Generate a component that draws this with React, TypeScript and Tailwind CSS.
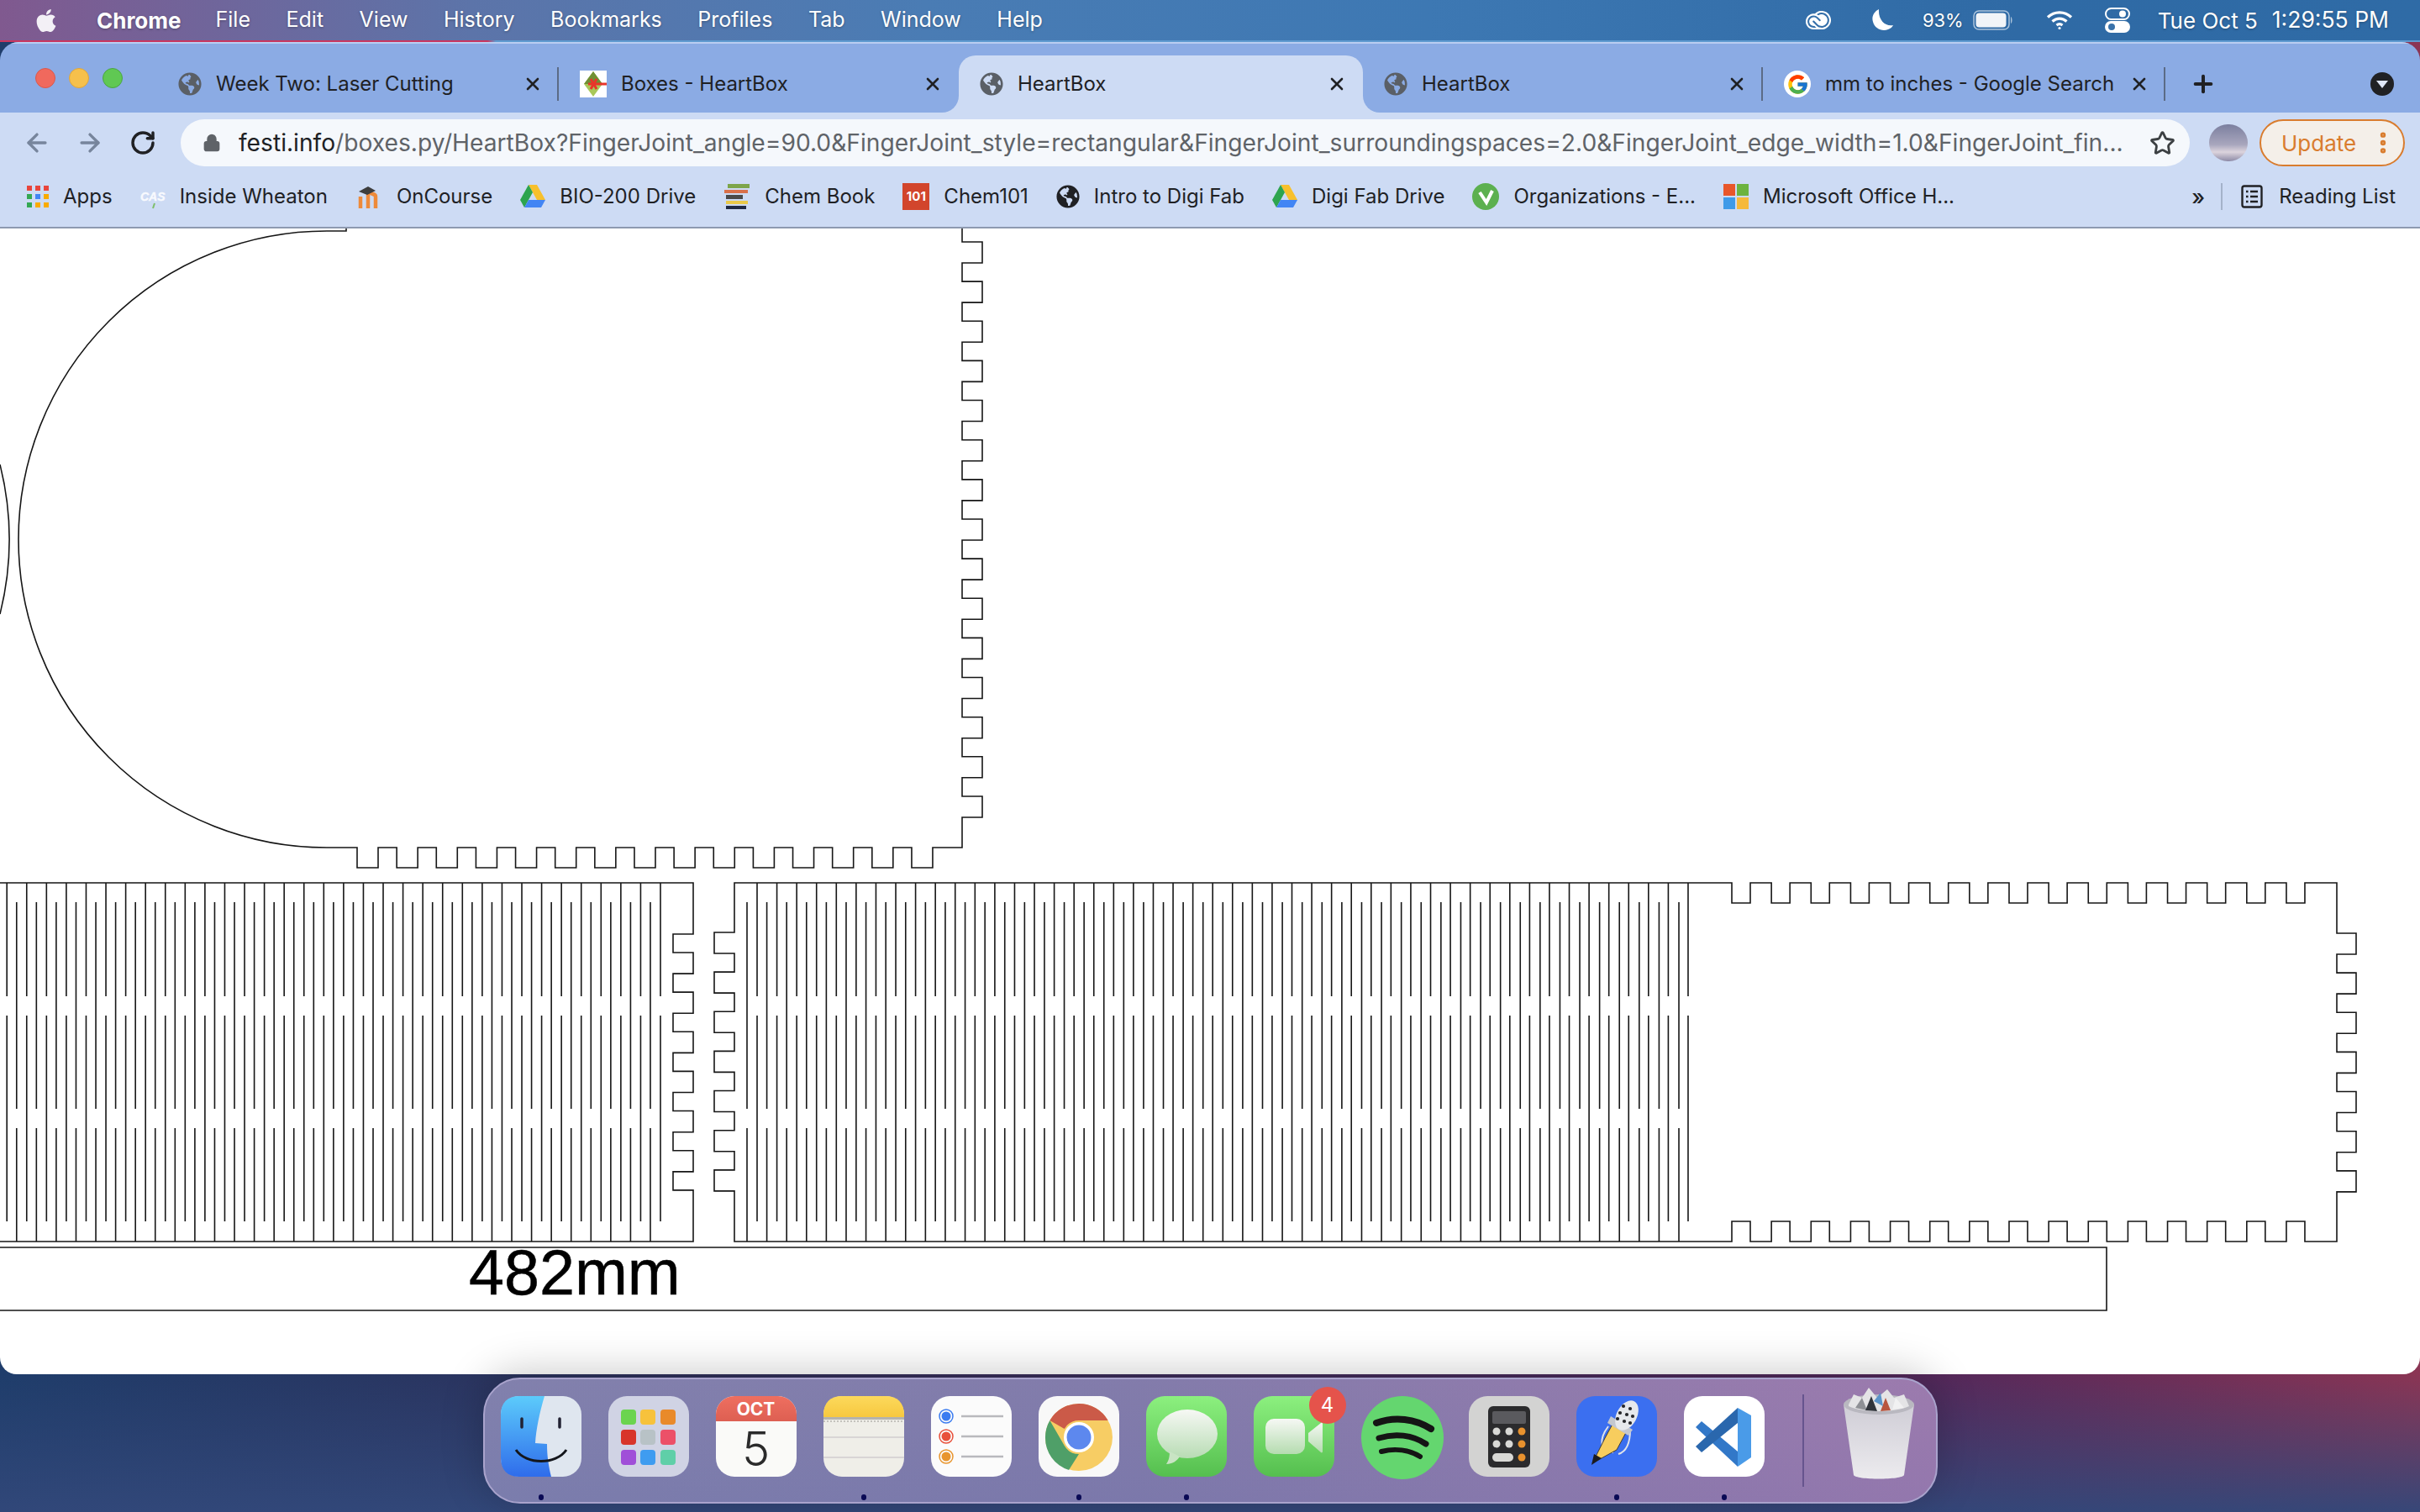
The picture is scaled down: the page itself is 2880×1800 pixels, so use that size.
import { ArrowLeft, ArrowRight, EllipsisVertical, Lock, Plus, RotateCw, Star, X } from "lucide-react";
import type { ReactNode } from "react";
import { FaApple, FaGlobeAmericas } from "react-icons/fa";
import { FcGoogle } from "react-icons/fc";
import { SiAdobecreativecloud } from "react-icons/si";

const uiFont = "font-['Inter','Liberation_Sans',sans-serif]";
const P = 47.14;
const range = (n: number) => Array.from({ length: n }, (_, i) => i);

function heartPath() {
  let d = "M412,272 L412,275 L389,275 A367,367 0 0 0 389,1009";
  range(15).forEach((k) => {
    const x = 425 + P * k;
    d += ` L${x},1009 L${x},1033 L${x + 25},1033 L${x + 25},1009`;
  });
  d += " L1145,1009";
  range(15).reverse().forEach((k) => {
    const y = 288 + P * k;
    d += ` L1145,${y + 25} L1169,${y + 25} L1169,${y} L1145,${y}`;
  });
  return d + " L1145,272";
}

function leftStripPath() {
  let d = "M0,1051 L825,1051";
  range(7).forEach((k) => {
    const y = 1112 + P * k;
    d += ` L825,${y} L801,${y} L801,${y + 22} L825,${y + 22}`;
  });
  return d + " L825,1478 L0,1478";
}

function rightStripPath() {
  let d = "M874,1051";
  range(15).forEach((k) => {
    const x = 2061 + P * k;
    d += ` L${x},1051 L${x},1075 L${x + 22},1075 L${x + 22},1051`;
  });
  d += " L2781,1051";
  range(7).forEach((k) => {
    const y = 1111 + P * k;
    d += ` L2781,${y} L2804,${y} L2804,${y + 25} L2781,${y + 25}`;
  });
  d += " L2781,1478";
  range(15).reverse().forEach((k) => {
    const x = 2061 + P * k;
    d += ` L${x + 22},1478 L${x + 22},1454 L${x},1454 L${x},1478`;
  });
  d += " L874,1478";
  range(7).reverse().forEach((k) => {
    const y = 1110 + P * k;
    d += ` L874,${y + 25} L850,${y + 25} L850,${y} L874,${y}`;
  });
  return d + " Z";
}

function hingePath() {
  let d = "";
  const a = (x: number) => {
    d += `M${x},1051 V1186 M${x},1209 V1454 `;
  };
  const b = (x: number) => {
    d += `M${x},1074 V1320 M${x},1343 V1478 `;
  };
  range(34).forEach((k) => a(786 - 23.57 * k));
  range(33).forEach((k) => b(774 - 23.57 * k));
  range(48).forEach((k) => {
    a(901 + 23.574 * k);
    b(889 + 23.596 * k);
  });
  return d;
}

function Drawing() {
  return (
    <svg className="block" width="2880" height="1364" viewBox="0 272 2880 1364" fill="none">
      <g stroke="#161616" strokeWidth="1.6">
        <path d={heartPath()} />
        <path d="M0,553 A367,367 0 0 1 0,731" />
        <path d={leftStripPath()} />
        <path d={rightStripPath()} />
        <path d={hingePath()} />
        <path d="M0,1485 H2507 V1560 H0" />
      </g>
      <text x="558" y="1541" fontFamily="'Liberation Sans', Arial, sans-serif" fontSize="75.5" fill="#000" stroke="#000" strokeWidth="0.5">
        482mm
      </text>
    </svg>
  );
}

function Globe({ className }: { className: string }) {
  return <FaGlobeAmericas className={className} />;
}

function BoxesFavicon() {
  return (
    <svg width="32" height="32" viewBox="0 0 32 32">
      <rect width="32" height="32" fill="#fff" />
      <path d="M16 1 L27 16 L16 31 L5 16 Z" fill="#a9c85a" />
      <path d="M16 1 L27 16 L5 16 Z" fill="#6f8f35" />
      <path d="M10 16 H32 M13 10 L20 22 M13 22 L20 10" stroke="#e8352a" strokeWidth="3" />
    </svg>
  );
}

function GoogleFavicon() {
  return (
    <span className="flex h-[32px] w-[32px] items-center justify-center rounded-full bg-white">
      <FcGoogle size={27} />
    </span>
  );
}

function Drive() {
  return (
    <svg width="30" height="28" viewBox="0 0 30 28">
      <path d="M10 0 H20 L30 18 H20 Z" fill="#f7c02c" />
      <path d="M10 0 L15 9 L5 27 L0 18 Z" fill="#2da44e" />
      <path d="M5 27 L10 18 H30 L25 27 Z" fill="#4285f4" />
    </svg>
  );
}

function AppsIcon() {
  const colors = ["#e8453c", "#e8453c", "#e8453c", "#34a853", "#4285f4", "#f9ab00", "#34a853", "#f9ab00", "#f9ab00"];
  return (
    <div className="grid w-[26px] grid-cols-3 gap-[4px]">
      {colors.map((c, i) => (
        <svg key={i} width="6" height="6">
          <rect width="6" height="6" fill={c} />
        </svg>
      ))}
    </div>
  );
}

function CasIcon() {
  return (
    <svg width="30" height="32" viewBox="0 0 30 32">
      <text x="0" y="21" fontFamily="'Liberation Sans', sans-serif" fontSize="14" fontStyle="italic" fontWeight="700" fill="#f8fafe" stroke="#f8fafe" strokeWidth="0.4">
        CAS
      </text>
      <path d="M17 24 L15 30" stroke="#7fbf6a" strokeWidth="2" />
    </svg>
  );
}

function OnCourseIcon() {
  return (
    <svg width="32" height="32" viewBox="0 0 32 32" fill="none">
      <path d="M6 30 V16 M15 30 V14 C15 12 24 12 24 16 V30" stroke="#ee8a3a" strokeWidth="4.5" />
      <path d="M4 10 L15 4 L24 9 L14 14 Z" fill="#3d3d3d" />
    </svg>
  );
}

function ChemBookIcon() {
  return (
    <svg width="32" height="30" viewBox="0 0 32 30">
      <rect x="5" y="0" width="26" height="5" fill="#7da54a" />
      <rect x="1" y="7" width="28" height="4" fill="#d9704a" />
      <rect x="3" y="13" width="20" height="5" fill="#4a4a4a" />
      <rect x="3" y="20" width="26" height="4" fill="#e9c94a" />
      <rect x="3" y="26" width="24" height="4" fill="#1f2a44" />
    </svg>
  );
}

function Chem101Icon() {
  return (
    <span className="flex h-[32px] w-[32px] items-center justify-center bg-[#d2452c] text-[15px] font-bold text-white">101</span>
  );
}

function OrgIcon() {
  return (
    <svg width="32" height="32" viewBox="0 0 32 32">
      <circle cx="16" cy="16" r="16" fill="#5cb04f" />
      <path d="M9 11 L17 23 L24 9" stroke="#fff" strokeWidth="4" fill="none" />
    </svg>
  );
}

function MsIcon() {
  return (
    <div className="grid h-[30px] w-[30px] grid-cols-2 gap-[2px]">
      <div className="bg-[#e8562a]" />
      <div className="bg-[#6cb33f]" />
      <div className="bg-[#3f9ae8]" />
      <div className="bg-[#f6b93b]" />
    </div>
  );
}

function ReadingIcon() {
  return (
    <svg width="26" height="28" viewBox="0 0 26 28" fill="none" stroke="#202124" strokeWidth="2.4">
      <rect x="1.5" y="1.5" width="23" height="25" rx="2.5" />
      <path d="M6 8 H8.5 M11 8 H20 M6 14 H8.5 M11 14 H20 M6 20 H8.5 M11 20 H20" />
    </svg>
  );
}

function Battery() {
  return (
    <svg width="48" height="24" viewBox="0 0 48 24">
      <rect x="1" y="1" width="42" height="22" rx="6" fill="none" stroke="#ffffff" strokeOpacity="0.6" strokeWidth="1.5" />
      <rect x="3.5" y="3.5" width="36" height="17" rx="4" fill="#f1f4f8" />
      <path d="M45 8 C47 9 47 15 45 16 Z" fill="#ffffff" fillOpacity="0.6" />
    </svg>
  );
}

function Wifi() {
  return (
    <svg width="32" height="24" viewBox="0 0 32 24" fill="none" stroke="#fff" strokeWidth="3.2">
      <path d="M2 8.5 C10 1 22 1 30 8.5" />
      <path d="M7.5 13.5 C12.5 9 19.5 9 24.5 13.5" />
      <path d="M12.5 18 C14.5 16.5 17.5 16.5 19.5 18" />
      <circle cx="16" cy="21.5" r="1.6" fill="#fff" stroke="none" />
    </svg>
  );
}

function Toggles() {
  return (
    <svg width="30" height="30" viewBox="0 0 30 30">
      <rect x="1" y="1" width="28" height="13" rx="6.5" fill="none" stroke="#fff" strokeWidth="2" />
      <circle cx="21" cy="7.5" r="4" fill="#fff" />
      <rect x="0" y="16" width="30" height="14" rx="7" fill="#fff" />
      <circle cx="8" cy="23" r="4" fill="#3a72aa" />
    </svg>
  );
}

function Moon() {
  return (
    <svg width="26" height="26" viewBox="0 0 26 26">
      <path d="M9 0 C3 3 0 9 2 15 C4 23 13 27 20 24 C23 23 25 21 26 19 C17 21 8 13 9 0 Z" fill="#fff" />
    </svg>
  );
}

type TabItem = { title: string; icon: ReactNode; width: string; active?: boolean; sep?: boolean };

const tabs: TabItem[] = [
  { title: "Week Two: Laser Cutting", icon: <Globe className="h-[28px] w-[28px] text-[#5a5f66]" />, width: "w-[478px]", sep: true },
  { title: "Boxes - HeartBox", icon: <BoxesFavicon />, width: "w-[476px]" },
  { title: "HeartBox", icon: <Globe className="h-[28px] w-[28px] text-[#5a5f66]" />, width: "w-[481px]", active: true },
  { title: "HeartBox", icon: <Globe className="h-[28px] w-[28px] text-[#5a5f66]" />, width: "w-[476px]", sep: true },
  { title: "mm to inches - Google Search", icon: <GoogleFavicon />, width: "w-[479px]", sep: true },
];

function Tab({ tab }: { tab: TabItem }) {
  return (
    <div className={`${tab.width} relative flex h-[68px] items-center pl-[25px] ${tab.active ? "rounded-t-[20px] bg-[#cddbf4]" : ""}`}>
      {tab.active && (
        <>
          <div className="absolute bottom-0 left-[-20px] h-[20px] w-[20px] bg-[#cddbf4]">
            <div className="h-full w-full rounded-br-[20px] bg-[#8babe4]" />
          </div>
          <div className="absolute bottom-0 right-[-20px] h-[20px] w-[20px] bg-[#cddbf4]">
            <div className="h-full w-full rounded-bl-[20px] bg-[#8babe4]" />
          </div>
        </>
      )}
      {tab.icon}
      <span className="ml-[17px] text-[24px] text-[#202124]">{tab.title}</span>
      <X size={24} strokeWidth={2.6} className="absolute right-[19px] text-[#202124]" />
      {tab.sep && <div className="absolute right-0 h-[40px] w-[2px] bg-[#5b6b86]" />}
    </div>
  );
}

type Bookmark = { label: string; icon: ReactNode };

const bookmarks: Bookmark[] = [
  { label: "Apps", icon: <AppsIcon /> },
  { label: "Inside Wheaton", icon: <CasIcon /> },
  { label: "OnCourse", icon: <OnCourseIcon /> },
  { label: "BIO-200 Drive", icon: <Drive /> },
  { label: "Chem Book", icon: <ChemBookIcon /> },
  { label: "Chem101", icon: <Chem101Icon /> },
  { label: "Intro to Digi Fab", icon: <Globe className="h-[28px] w-[28px] text-[#202124]" /> },
  { label: "Digi Fab Drive", icon: <Drive /> },
  { label: "Organizations - E...", icon: <OrgIcon /> },
  { label: "Microsoft Office H...", icon: <MsIcon /> },
];

function MenuBar() {
  const items = ["File", "Edit", "View", "History", "Bookmarks", "Profiles", "Tab", "Window", "Help"];
  return (
    <div className="flex h-[50px] flex-col">
      <div className="flex h-[48px] items-center bg-[linear-gradient(90deg,#80598f_0px,#5c74a9_560px,#4a7cb4_1100px,#3d78b3_1700px,#2f6aa5_2400px,#2f6ba6_2880px)] pl-[41px] pr-[37px] text-[25px] text-white [text-shadow:0_1px_3px_rgba(0,0,0,0.3)]">
        <FaApple className="h-[31px] w-[28px] text-[#f3f0f6]" />
        <span className="ml-[46px] text-[26px] font-bold">Chrome</span>
        <div className="ml-[41px] flex gap-[42.5px]">
          {items.map((item) => (
            <span key={item}>{item}</span>
          ))}
        </div>
        <div className="ml-auto flex items-center">
          <SiAdobecreativecloud className="h-[30px] w-[38px] text-white" />
          <div className="ml-[44px]">
            <Moon />
          </div>
          <span className="ml-[35px] text-[22px]">93%</span>
          <div className="ml-[11px]">
            <Battery />
          </div>
          <div className="ml-[39px]">
            <Wifi />
          </div>
          <div className="ml-[38px]">
            <Toggles />
          </div>
          <span className="ml-[33px] text-[26px]">Tue Oct 5</span>
          <span className="ml-[17px] text-[26.5px]">1:29:55 PM</span>
        </div>
      </div>
      <div className="h-[2px] bg-[linear-gradient(90deg,#c8365f_0px,#c8365f_580px,#5e9ad0_590px,#5e9ad0_2880px)]" />
    </div>
  );
}

function TabStrip() {
  return (
    <div className="flex h-[84px] items-end border-t-2 border-[#b9cdf0] bg-[#8babe4]">
      <div className="flex h-[68px] w-[187px] items-center gap-[16px] pb-[14px] pl-[42px]">
        <div className="h-[24px] w-[24px] rounded-full border border-[#d9584c] bg-[#f0695d]" />
        <div className="h-[24px] w-[24px] rounded-full border border-[#dfa63a] bg-[#f6c04c]" />
        <div className="h-[24px] w-[24px] rounded-full border border-[#4aa542] bg-[#60c853]" />
      </div>
      {tabs.map((tab, i) => (
        <Tab key={i} tab={tab} />
      ))}
      <div className="flex h-[68px] flex-1 items-center">
        <Plus size={32} strokeWidth={3} className="ml-[29px] text-[#202124]" />
        <div className="ml-[183px] flex h-[28px] w-[28px] items-center justify-center rounded-full bg-[#202124]">
          <div className="h-0 w-0 border-x-[7px] border-t-[9px] border-x-transparent border-t-[#dfe7f7]" />
        </div>
      </div>
    </div>
  );
}

function Toolbar() {
  return (
    <div className="flex h-[72px] items-center bg-[#cddbf4]">
      <ArrowLeft size={34} strokeWidth={2.4} className="ml-[27px] text-[#77859c]" />
      <ArrowRight size={34} strokeWidth={2.4} className="ml-[29px] text-[#77859c]" />
      <RotateCw size={32} strokeWidth={2.6} className="ml-[30px] text-[#202124]" />
      <div className="ml-[29px] flex h-[56px] w-[2391px] items-center rounded-full bg-[#f5f8fc] pl-[26px]">
        <Lock size={22} fill="#5f6368" strokeWidth={2.4} className="text-[#5f6368]" />
        <div className="ml-[21px] w-[2246px] overflow-hidden whitespace-nowrap text-[28.2px] text-[#5f6368]">
          <span className="text-[#202124]">festi.info</span>
          /boxes.py/HeartBox?FingerJoint_angle=90.0&amp;FingerJoint_style=rectangular&amp;FingerJoint_surroundingspaces=2.0&amp;FingerJoint_edge_width=1.0&amp;FingerJoint_fin...
        </div>
        <Star size={31} strokeWidth={2.2} className="ml-[28px] text-[#3c4043]" />
      </div>
      <div className="ml-[23px] h-[44px] w-[46px] rounded-full bg-[linear-gradient(180deg,#7b7f9f_0%,#a8a6bd_55%,#dcd4dd_75%,#8d8aa6_100%)]" />
      <div className="ml-[14px] flex h-[56px] w-[173px] items-center rounded-full border-2 border-[#d97c2e] bg-[#f4efe9] pl-[24px] text-[26px] text-[#d97c2e]">
        Update
        <EllipsisVertical size={32} strokeWidth={2.8} className="ml-[16px]" />
      </div>
    </div>
  );
}

function BookmarksBar() {
  return (
    <div className="flex h-[66px] items-start border-b-2 border-[#8d9ab0] bg-[#cddbf4] pl-[32px] pt-[10px] text-[24px] text-[#202124]">
      <div className="flex h-[36px] items-center gap-[33px]">
        {bookmarks.map((b) => (
          <div key={b.label} className="flex items-center gap-[17px]">
            {b.icon}
            <span>{b.label}</span>
          </div>
        ))}
      </div>
      <div className="ml-auto flex h-[36px] items-center pr-[29px]">
        <span className="text-[26px] font-medium">»</span>
        <div className="ml-[19px] h-[32px] w-[2px] bg-[#a4b2ca]" />
        <div className="ml-[22px]">
          <ReadingIcon />
        </div>
        <span className="ml-[19px]">Reading List</span>
      </div>
    </div>
  );
}

function Squircle({ className, children }: { className: string; children?: ReactNode }) {
  return <div className={`h-[96px] w-[96px] overflow-hidden rounded-[22px] ${className}`}>{children}</div>;
}

function Finder() {
  return (
    <svg width="96" height="96" viewBox="0 0 96 96" fill="none">
      <defs>
        <linearGradient id="finderBlue" x1="0" y1="0" x2="0" y2="1">
          <stop offset="0" stopColor="#5ccbfb" />
          <stop offset="1" stopColor="#2f6ceb" />
        </linearGradient>
      </defs>
      <rect width="96" height="96" rx="22" fill="#dfe6ef" />
      <path d="M22 0 H52 C46 20 42 40 41 56 L55 57 C55 72 57 84 60 96 H22 C8 96 0 88 0 74 V22 C0 8 8 0 22 0 Z" fill="url(#finderBlue)" />
      <path d="M25 27 V37 M70 27 V37" stroke="#223" strokeWidth="3.5" strokeLinecap="round" />
      <path d="M18 64 C30 82 66 82 78 64" stroke="#14161c" strokeWidth="3" />
    </svg>
  );
}

function Launchpad() {
  const colors = ["#6bd44f", "#f7c23c", "#e98a2a", "#d8352a", "#b8c2c6", "#ec5068", "#a04fd8", "#3f9cf0", "#5fcfa8"];
  return (
    <Squircle className="bg-[#d0d3e4] pl-[15px] pt-[16px]">
      <div className="grid w-[66px] grid-cols-3 gap-x-[5px] gap-y-[6px]">
        {colors.map((c, i) => (
          <svg key={i} width="18" height="18">
            <rect width="18" height="18" rx="4" fill={c} />
          </svg>
        ))}
      </div>
    </Squircle>
  );
}

function CalendarIcon() {
  return (
    <Squircle className="flex flex-col bg-[#fafaf8] font-['Inter',sans-serif]">
      <div className="flex h-[30px] items-center justify-center bg-[linear-gradient(180deg,#ef6f60,#dd5f52)] text-[21px] font-bold leading-none text-white">OCT</div>
      <div className="flex flex-1 items-center justify-center text-[56px] font-light leading-none text-[#2b2b2b]">5</div>
    </Squircle>
  );
}

function Notes() {
  return (
    <svg width="96" height="96" viewBox="0 0 96 96">
      <defs>
        <linearGradient id="notesY" x1="0" y1="0" x2="0" y2="1">
          <stop offset="0" stopColor="#fcd95c" />
          <stop offset="1" stopColor="#f7c83f" />
        </linearGradient>
      </defs>
      <rect width="96" height="96" rx="22" fill="#efeee8" />
      <path d="M0 25 V22 C0 8 8 0 22 0 H74 C88 0 96 8 96 22 V25 Z" fill="url(#notesY)" />
      <rect y="25" width="96" height="3" fill="#b5b3ae" />
      <path d="M0 30 H96" stroke="#c4c2bd" strokeWidth="2" strokeDasharray="2 2" />
      <path d="M0 49 H96 M0 73 H96" stroke="#d8d5d5" strokeWidth="2" />
    </svg>
  );
}

function Reminders() {
  const rows = [
    { y: 24, c: "#3b7cf0" },
    { y: 48, c: "#e8503a" },
    { y: 72, c: "#e8952e" },
  ];
  return (
    <svg width="96" height="96" viewBox="0 0 96 96" fill="none">
      <rect width="96" height="96" rx="22" fill="#fbfbfb" />
      {rows.map((r) => (
        <g key={r.y}>
          <circle cx="18" cy={r.y} r="8" stroke={r.c} strokeWidth="1.5" />
          <circle cx="18" cy={r.y} r="5.5" fill={r.c} />
          <path d={`M36 ${r.y} H86`} stroke="#b9b9bd" strokeWidth="2.5" />
        </g>
      ))}
    </svg>
  );
}

function ChromeIcon() {
  return (
    <svg width="96" height="96" viewBox="0 0 96 96">
      <rect width="96" height="96" rx="22" fill="#f8f8f8" />
      <circle cx="48" cy="49" r="40" fill="#f7cd64" />
      <path d="M48 9 A40 40 0 0 1 82.6 29 L48 29 A20 20 0 0 0 30.7 39 L13.4 29 A40 40 0 0 1 48 9 Z" fill="#cb5a48" />
      <path d="M13.4 29 L30.7 59 A20 20 0 0 0 48 69 L36 88 A40 40 0 0 1 8 49 A40 40 0 0 1 13.4 29 Z" fill="#4f9f68" />
      <circle cx="48" cy="49" r="18" fill="#fff" />
      <circle cx="48" cy="49" r="14.5" fill="#5d88ee" />
    </svg>
  );
}

function Messages() {
  return (
    <svg width="96" height="96" viewBox="0 0 96 96">
      <defs>
        <linearGradient id="msgG" x1="0" y1="0" x2="0" y2="1">
          <stop offset="0" stopColor="#8cf07f" />
          <stop offset="1" stopColor="#55bf4f" />
        </linearGradient>
        <linearGradient id="msgW" x1="0" y1="0" x2="0" y2="1">
          <stop offset="0" stopColor="#f6f8f4" />
          <stop offset="1" stopColor="#b8dcb4" />
        </linearGradient>
      </defs>
      <rect width="96" height="96" rx="22" fill="url(#msgG)" />
      <ellipse cx="49" cy="45" rx="36" ry="29" fill="url(#msgW)" />
      <path d="M28 66 C28 74 26 78 24 81 C31 81 37 77 40 72 Z" fill="#c9e4c4" />
    </svg>
  );
}

function FaceTime() {
  return (
    <svg width="96" height="96" viewBox="0 0 96 96">
      <defs>
        <linearGradient id="ftG" x1="0" y1="0" x2="0" y2="1">
          <stop offset="0" stopColor="#8cf07f" />
          <stop offset="1" stopColor="#55bf4f" />
        </linearGradient>
        <linearGradient id="ftW" x1="0" y1="0" x2="0" y2="1">
          <stop offset="0" stopColor="#f6f8f4" />
          <stop offset="1" stopColor="#b5dcb0" />
        </linearGradient>
      </defs>
      <rect width="96" height="96" rx="22" fill="url(#ftG)" />
      <rect x="14" y="27" width="47" height="42" rx="10" fill="url(#ftW)" />
      <path d="M65 44 L80 32 C81 31 82 32 82 33 V66 C82 67 81 68 80 67 L65 54 Z" fill="url(#ftW)" />
    </svg>
  );
}

function Spotify() {
  return (
    <svg width="98" height="99" viewBox="0 0 98 99" fill="none" stroke="#151515" strokeLinecap="round">
      <ellipse cx="49" cy="49.5" rx="49" ry="49.5" fill="#64d66f" stroke="none" />
      <path d="M18 32 C40 24 64 27 83 39" strokeWidth="8" />
      <path d="M21 50 C40 44 61 46 77 57" strokeWidth="7" />
      <path d="M24 66 C40 62 57 64 70 72" strokeWidth="6" />
    </svg>
  );
}

function Calculator() {
  return (
    <svg width="96" height="96" viewBox="0 0 96 96">
      <rect width="96" height="96" rx="22" fill="#d3d3d2" />
      <rect x="23" y="12" width="50" height="73" rx="6" fill="#2b2b2d" />
      <rect x="28" y="18" width="40" height="15" rx="2" fill="#5a5a5e" />
      {[42, 57].map((y) => (
        <g key={y}>
          <circle cx="33" cy={y} r="4.5" fill="#d9d9d6" />
          <circle cx="48" cy={y} r="4.5" fill="#d9d9d6" />
          <circle cx="63" cy={y} r="4.5" fill="#e8922e" />
        </g>
      ))}
      <rect x="28" y="68" width="25" height="10" rx="5" fill="#d9d9d6" />
      <circle cx="63" cy="73" r="4.5" fill="#e8922e" />
    </svg>
  );
}

function Notability() {
  return (
    <svg width="96" height="96" viewBox="0 0 96 96" fill="none">
      <rect width="96" height="96" rx="22" fill="#3b6ff0" />
      <path d="M38 36 C26 52 28 66 44 67 M64 40 C64 55 60 66 50 69" stroke="#dfe3ea" strokeWidth="2" />
      <path d="M34 50 L46 28 L62 38 L48 64 L19 80 Z" fill="#f7cd5e" stroke="#3b3b3b" strokeWidth="1" />
      <path d="M18 82 L21 69 L30 74 Z" fill="#1b1b1f" />
      <path d="M41 24 L67 40 L62 47 L37 32 Z" fill="#c3c7cf" />
      <ellipse cx="60" cy="23" rx="12" ry="19" transform="rotate(28 60 23)" fill="#e6e8ec" />
      {[[56, 12], [64, 15], [52, 20], [60, 22], [67, 24], [49, 27], [57, 30], [64, 32]].map(([x, y]) => (
        <circle key={`${x}-${y}`} cx={x} cy={y} r="2.1" fill="#26262a" />
      ))}
    </svg>
  );
}

function VsCode() {
  return (
    <svg width="96" height="96" viewBox="0 0 96 96">
      <rect width="96" height="96" rx="22" fill="#fff" />
      <path d="M14 37 L21 30 L64 66 V84 Z" fill="#3278c8" />
      <path d="M14 60 L21 67 L64 32 V14 Z" fill="#2a67ad" />
      <path d="M64 14 L80 23 V73 L64 84 Z" fill="#4a9be8" />
    </svg>
  );
}

function Trash() {
  return (
    <svg width="84" height="111" viewBox="0 0 84 111">
      <defs>
        <linearGradient id="trashG" x1="0" y1="0" x2="0" y2="1">
          <stop offset="0" stopColor="#cfcdd6" />
          <stop offset="1" stopColor="#ecebee" />
        </linearGradient>
      </defs>
      <path d="M0 20 L12 104 C14 110 70 110 72 104 L84 20 Z" fill="url(#trashG)" />
      <ellipse cx="42" cy="20" rx="42" ry="12" fill="#b9b8c0" />
      <path d="M6 20 L12 8 L22 12 L30 0 L40 12 L52 2 L60 12 L72 8 L78 22 C60 30 24 30 6 22 Z" fill="#e4e4e6" />
      <path d="M14 24 L22 12 L28 27 Z" fill="#8e9095" />
      <path d="M26 27 L33 10 L40 28 Z" fill="#30343b" />
      <path d="M44 28 L50 12 L56 27 Z" fill="#b8553f" />
      <path d="M36 16 L44 6 L47 22 Z" fill="#5b93c9" />
      <path d="M58 26 L62 12 L72 24 Z" fill="#f1f1f2" />
    </svg>
  );
}

type DockItem = { key: string; icon: ReactNode; running?: boolean; badge?: string };

const dockItems: DockItem[] = [
  { key: "finder", icon: <Finder />, running: true },
  { key: "launchpad", icon: <Launchpad /> },
  { key: "calendar", icon: <CalendarIcon /> },
  { key: "notes", icon: <Notes />, running: true },
  { key: "reminders", icon: <Reminders /> },
  { key: "chrome", icon: <ChromeIcon />, running: true },
  { key: "messages", icon: <Messages />, running: true },
  { key: "facetime", icon: <FaceTime />, badge: "4" },
  { key: "spotify", icon: <Spotify /> },
  { key: "calculator", icon: <Calculator /> },
  { key: "notability", icon: <Notability />, running: true },
  { key: "vscode", icon: <VsCode />, running: true },
];

function Dock() {
  return (
    <div className="relative z-10 mt-[4px] flex h-[150px] w-[1731px] self-center rounded-[44px] border-2 border-[#a9a3cc] bg-[linear-gradient(180deg,rgba(255,255,255,0.02),rgba(70,110,190,0.08)),linear-gradient(90deg,#7f7eab_0%,#8079a9_45%,#9a78ac_100%)] pl-[19px] pt-[20px] shadow-[0_-6px_50px_rgba(0,0,0,0.22)]">
      <div className="flex gap-[32px]">
        {dockItems.map((item) => (
          <div key={item.key} className="relative h-[96px] w-[96px]">
            {item.icon}
            {item.badge && (
              <div className="absolute right-[-14px] top-[-11px] flex h-[44px] w-[44px] items-center justify-center rounded-full bg-[#e5534b] text-[24px] text-white">
                {item.badge}
              </div>
            )}
            {item.running && <div className="absolute left-[45px] top-[117px] h-[7px] w-[6px] rounded-full bg-[#0a0a55]" />}
          </div>
        ))}
      </div>
      <div className="ml-[45px] mt-[-2px] h-[110px] w-[2px] bg-[#66548e]" />
      <div className="ml-[47px] mt-[-10px]">
        <Trash />
      </div>
    </div>
  );
}

export default function App() {
  return (
    <div
      className={`${uiFont} flex h-[1800px] w-[2880px] flex-col overflow-hidden bg-[linear-gradient(180deg,rgba(45,72,122,0)_1636px,rgba(50,72,122,0.95)_1800px),linear-gradient(90deg,#1f3d6b_0px,#32305a_900px,#54285a_2300px,#8b3554_2880px)]`}
    >
      <MenuBar />
      <div className="flex h-[1586px] flex-col overflow-hidden rounded-t-[22px] rounded-b-[20px]">
        <TabStrip />
        <Toolbar />
        <BookmarksBar />
        <div className="flex-1 bg-white">
          <Drawing />
        </div>
      </div>
      <Dock />
    </div>
  );
}
